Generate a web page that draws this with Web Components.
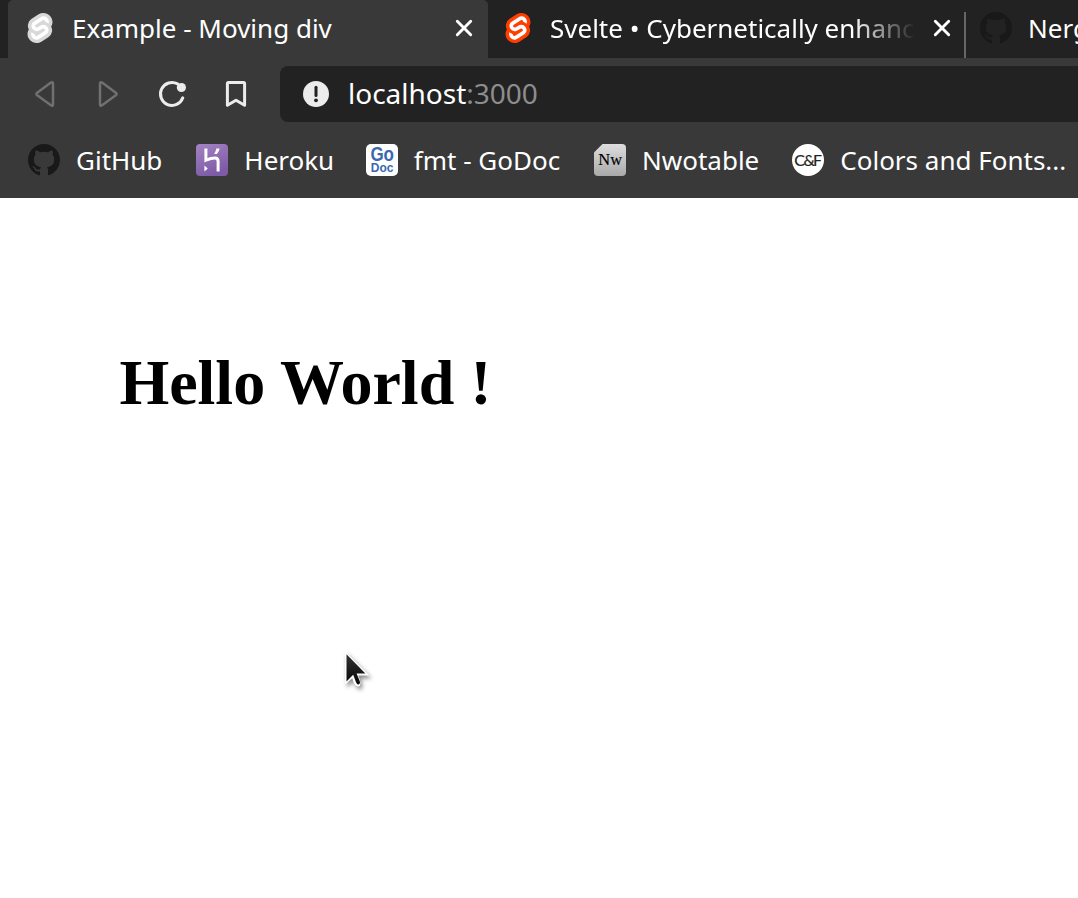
<!DOCTYPE html>
<html lang="en">
<head>
<meta charset="utf-8">
<title>Example - Moving div</title>
<style>
html,body{margin:0;height:100%;overflow:hidden;background:#fff}
</style>
</head>
<body>
<browser-window></browser-window>
<script>
const define=(name,css,html)=>{
  customElements.define(name,class extends HTMLElement{
    constructor(){
      super();
      const t=document.createElement('template');
      t.innerHTML=`<style>:host{box-sizing:border-box}*{box-sizing:border-box}${css}</style>${typeof html==='function'?html(this):html}`;
      this.attachShadow({mode:'open'}).append(t.content.cloneNode(true));
    }
  });
};
const svelteOuter='M20.712 3.175C18.484-.015 14.082-.96 10.9 1.068L5.31 4.63a6.412 6.412 0 0 0-2.896 4.295 6.753 6.753 0 0 0 .666 4.336 6.43 6.43 0 0 0-.96 2.396 6.833 6.833 0 0 0 1.168 5.167c2.229 3.19 6.63 4.135 9.812 2.108l5.59-3.562a6.41 6.41 0 0 0 2.896-4.295 6.756 6.756 0 0 0-.665-4.336 6.429 6.429 0 0 0 .958-2.396 6.831 6.831 0 0 0-1.167-5.168Z';
const svelteInner='M10.354 21.125a4.44 4.44 0 0 1-4.765-1.767 4.109 4.109 0 0 1-.703-3.107 3.898 3.898 0 0 1 .134-.522l.105-.321.287.21a7.21 7.21 0 0 0 2.186 1.092l.208.063-.02.208a1.253 1.253 0 0 0 .226.83 1.337 1.337 0 0 0 1.435.533 1.231 1.231 0 0 0 .343-.15l5.59-3.562a1.164 1.164 0 0 0 .524-.778 1.242 1.242 0 0 0-.211-.937 1.338 1.338 0 0 0-1.435-.533 1.23 1.23 0 0 0-.343.15l-2.133 1.36a4.078 4.078 0 0 1-1.135.499 4.44 4.44 0 0 1-4.765-1.766 4.108 4.108 0 0 1-.702-3.108 3.855 3.855 0 0 1 1.742-2.582l5.589-3.563a4.072 4.072 0 0 1 1.135-.499 4.44 4.44 0 0 1 4.765 1.767 4.109 4.109 0 0 1 .703 3.107 3.943 3.943 0 0 1-.134.522l-.105.321-.286-.21a7.204 7.204 0 0 0-2.187-1.093l-.208-.063.02-.207a1.255 1.255 0 0 0-.226-.831 1.337 1.337 0 0 0-1.435-.532 1.231 1.231 0 0 0-.343.15L8.62 9.368a1.162 1.162 0 0 0-.524.778 1.24 1.24 0 0 0 .211.937 1.338 1.338 0 0 0 1.435.533 1.235 1.235 0 0 0 .344-.151l2.132-1.36a4.067 4.067 0 0 1 1.135-.498 4.44 4.44 0 0 1 4.765 1.766 4.108 4.108 0 0 1 .702 3.108 3.857 3.857 0 0 1-1.742 2.583l-5.589 3.562a4.072 4.072 0 0 1-1.135.499Z';
const svelte=(a,b)=>`<svg viewBox="-.8 -.8 25.6 25.6"><path fill="${a}" d="${svelteOuter}"/><path fill="${b}" d="${svelteInner}"/></svg>`;
const stroke=(c,w,d,extra='')=>`<svg viewBox="0 0 32 32" fill="none" stroke="${c}" stroke-width="${w}" stroke-linejoin="round" stroke-linecap="round"><path d="${d}"/>${extra}</svg>`;
const icons={
  'svelte-gray':svelte('#d8d8d8','#fff'),
  svelte:svelte('#ff3e00','#fff'),
  github:`<svg viewBox="0 0 16 16"><path fill="#191919" d="M8 0C3.58 0 0 3.58 0 8c0 3.54 2.29 6.53 5.47 7.59.4.07.55-.17.55-.38 0-.19-.01-.82-.01-1.49-2.01.37-2.53-.49-2.69-.94-.09-.23-.48-.94-.82-1.13-.28-.15-.68-.52-.01-.53.63-.01 1.08.58 1.23.82.72 1.21 1.87.87 2.33.66.07-.52.28-.87.51-1.07-1.78-.2-3.64-.89-3.64-3.95 0-.87.31-1.59.82-2.15-.08-.2-.36-1.02.08-2.12 0 0 .67-.21 2.2.82.64-.18 1.32-.27 2-.27s1.36.09 2 .27c1.53-1.04 2.2-.82 2.2-.82.44 1.1.16 1.92.08 2.12.51.56.82 1.27.82 2.15 0 3.07-1.87 3.75-3.65 3.95.29.25.54.73.54 1.48 0 1.07-.01 1.93-.01 2.2 0 .21.15.46.55.38A8.01 8.01 0 0 0 16 8c0-4.42-3.58-8-8-8Z"/></svg>`,
  back:stroke('#707070',2.5,'M22.6 4.8Q25 3.2 25 5.6V26.4Q25 28.8 22.6 27.1L9.2 17.3Q7.6 16 9.2 14.7Z'),
  forward:stroke('#707070',2.5,'M10.4 4.8Q8 3.2 8 5.6V26.4Q8 28.8 10.4 27.1L23.8 17.3Q25.4 16 23.8 14.7Z'),
  reload:stroke('#ececec',3,'M21.6 5.9A11.5 11.5 0 1 0 26.8 19.8','<circle cx="25.4" cy="9.5" r="4.6" fill="#ececec" stroke="none"/>'),
  bookmark:stroke('#ececec',3,'M8.5 4.5H23.5Q24.6 4.5 24.6 5.6V27.3L16 22.2 7.4 27.3V5.6Q7.4 4.5 8.5 4.5Z'),
  info:`<svg viewBox="0 0 32 32"><circle cx="16" cy="16" r="13" fill="#ececec"/><path d="M16 9.3v8.1" stroke="#222" stroke-width="3" stroke-linecap="round"/><circle cx="16" cy="22.3" r="1.9" fill="#222"/></svg>`,
  close:`<svg viewBox="0 0 32 32"><path d="M9.3 9.3 22.7 22.7M22.7 9.3 9.3 22.7" stroke="#fff" stroke-width="2.9" stroke-linecap="round"/></svg>`,
  heroku:`<svg viewBox="0 0 32 32"><defs><linearGradient id="h" x2=".4" y2="1"><stop stop-color="#a583c4"/><stop offset="1" stop-color="#7e5ba6"/></linearGradient></defs><rect width="32" height="32" rx="4" fill="url(#h)"/><path d="M9.9 4.6V16.2C14 14.6 17 14 19 14 21.7 14 22.1 16 22.1 17.5V27.6" fill="none" stroke="#fff" stroke-width="3"/><path d="M8.4 21.6V27.4L11.8 24.5ZM20.3 4.6H23.6C23.2 6.8 22.2 8.5 20.8 10H18C19.3 8.4 20 6.6 20.3 4.6Z" fill="#fff"/></svg>`,
  godoc:`<svg viewBox="0 0 32 32"><rect width="32" height="32" rx="5" fill="#fff"/><g fill="#3b68b0" font-family="Liberation Sans,sans-serif" font-weight="bold"><text x="4.4" y="17" font-size="19.5" textLength="23.6" lengthAdjust="spacingAndGlyphs">Go</text><text x="4.8" y="28.4" font-size="12" textLength="22.6" lengthAdjust="spacingAndGlyphs">Doc</text></g></svg>`,
  nw:`<svg viewBox="0 0 32 32"><defs><linearGradient id="n" x2="0" y2="1"><stop stop-color="#dedede"/><stop offset="1" stop-color="#a9a9a9"/></linearGradient></defs><path d="M8.5 0H28Q32 0 32 4V28Q32 32 28 32H4Q0 32 0 28V8.5Z" fill="url(#n)"/><text x="4.3" y="20.8" font-size="16" textLength="23.7" lengthAdjust="spacingAndGlyphs" font-family="Liberation Serif,serif" fill="#000" stroke="#000" stroke-width=".15">Nw</text></svg>`,
  cf:`<svg viewBox="0 0 32 32"><circle cx="16" cy="16" r="16" fill="#fff"/><g transform="translate(2.2 21.9) scale(1.1 1)"><text x="0 8.4 17.2" y="0" font-size="14.5" font-family="Lato,sans-serif" fill="#222" stroke="#222" stroke-width=".15">C&amp;F</text></g></svg>`
};
define('ui-icon',':host{display:block;flex:none;width:32px;height:32px}svg{display:block;width:100%;height:100%}',el=>icons[el.getAttribute('name')]);

define('browser-tab',`
:host{display:flex;flex:none;align-items:center;width:480px;height:58px;padding:0 8px 2px 16px;gap:16px;background:#222}
:host([active]){position:relative;z-index:1;background:#393939;border-radius:5px 5px 0 0}
.title{flex:1;min-width:0;overflow:hidden;white-space:nowrap;line-height:40px;-webkit-mask-image:linear-gradient(90deg,#000 calc(100% - 62px),transparent)}
:host([active]) .title,:host([last]) .title{-webkit-mask-image:none}
.close{margin-left:-5px}`,
el=>`<ui-icon name="${el.getAttribute('icon')}"></ui-icon><span class="title"><slot></slot></span><ui-icon class="close" name="close"></ui-icon>`);

define('tab-strip',`
:host{display:flex;height:58px;padding-left:8px;background:#222;overflow:hidden;font-size:26px}
browser-tab+browser-tab{margin-left:-2px}
.divided{background:linear-gradient(#666,#666) 0 12px/2px 46px no-repeat #222}`,
`<browser-tab active icon="svelte-gray">Example - Moving div</browser-tab><browser-tab icon="svelte">Svelte • Cybernetically enhanc</browser-tab><browser-tab last class="divided" icon="github">Nerg</browser-tab>`);

define('address-bar',`
:host{display:flex;flex:1;align-items:center;height:56px;padding-left:20px;gap:16px;background:#222;border-radius:8px 0 0 8px;font-size:28px;line-height:40px;white-space:nowrap}
.url{padding-bottom:2px}
.port{color:#8d8d8d}`,
`<ui-icon name="info"></ui-icon><span class="url"><slot></slot><span class="port"><slot name="port"></slot></span></span>`);

define('nav-bar',`
:host{display:flex;align-items:center;height:72px;padding-left:28px}
.buttons{display:flex;gap:32px;margin-right:28px}`,
`<div class="buttons"><ui-icon name="back"></ui-icon><ui-icon name="forward"></ui-icon><ui-icon name="reload"></ui-icon><ui-icon name="bookmark"></ui-icon></div><address-bar>localhost<span slot="port">:3000</span></address-bar>`);

define('bookmark-item',`
:host{display:flex;flex:none;align-items:center;gap:16px;line-height:40px;white-space:nowrap}`,
el=>`<ui-icon name="${el.getAttribute('icon')}"></ui-icon><span><slot></slot></span>`);

define('bookmark-bar',`
:host{display:flex;align-items:center;height:68px;padding:0 0 8px 28px;gap:33px;font-size:26px}
bookmark-item:nth-of-type(1){margin-right:1px}
bookmark-item:nth-of-type(2){margin-right:-1.4px}
bookmark-item:nth-of-type(3){margin-right:.8px}`,
`<bookmark-item icon="github">GitHub</bookmark-item><bookmark-item icon="heroku">Heroku</bookmark-item><bookmark-item icon="godoc">fmt - GoDoc</bookmark-item><bookmark-item icon="nw">Nwotable</bookmark-item><bookmark-item icon="cf">Colors and Fonts...</bookmark-item>`);

define('page-view',`
:host{display:block;flex:1;padding:148px 0 0 119.4px;background:#fff;color:#000}
h1{margin:0;font:bold 64px/74px "Liberation Serif",serif}`,
`<h1>Hello World !</h1>`);

define('mouse-pointer',`
:host{display:block;position:absolute;left:335px;top:641px;width:48px;height:60px}
svg{display:block;filter:drop-shadow(2px 3px 2px rgba(0,0,0,.45))}`,
`<svg width="48" height="60"><defs><linearGradient id="p" x2="0" y2="1"><stop stop-color="#333"/><stop offset="1" stop-color="#080808"/></linearGradient></defs><path d="M10 10V43.5L17.3 37.3Q19.5 46.3 23.5 45.5 27.5 44.5 23.3 34.6H34.5Z" fill="#fff"/><path d="M11.5 13.3V40.5L18.2 33.8 21 41.2Q22.3 44 24 43.2 25.8 42.4 24.7 39.9L21.6 32.4H30.4Z" fill="url(#p)"/></svg>`);

define('browser-window',`
:host{display:flex;flex-direction:column;position:relative;width:100%;height:100%;overflow:hidden;background:#393939;color:#fff;font-family:"Noto Sans",sans-serif}`,
`<tab-strip></tab-strip><nav-bar></nav-bar><bookmark-bar></bookmark-bar><page-view></page-view><mouse-pointer></mouse-pointer>`);
</script>
</body>
</html>
